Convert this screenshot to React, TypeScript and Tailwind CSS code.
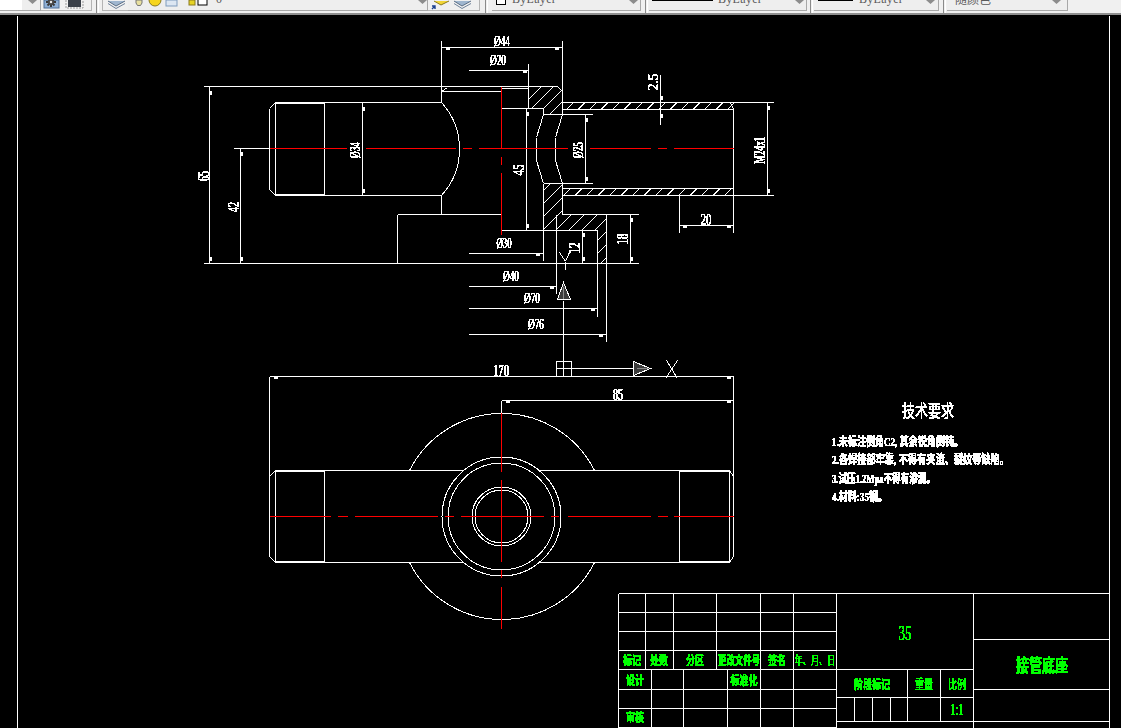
import React from "react";

type Seg = [number, number, number, number];

const FONT = '"Liberation Serif","Noto Sans CJK SC",serif';
const TOOLFONT = '"Liberation Serif","Noto Sans CJK SC",serif';

const white: Seg[] = [
  // front view outline
  [203, 86, 557, 86], [203, 263, 638, 263],
  [441, 40, 441, 102], [441, 195, 441, 214], [397, 214, 501, 214], [397, 214, 397, 263],
  [275, 102, 441, 102], [275, 195, 441, 195], [275, 102, 269, 108], [269, 108, 269, 189], [269, 189, 275, 195],
  [275, 103, 324, 103], [275, 194, 324, 194], [275, 102, 275, 195], [324, 103, 324, 194],
  [233, 148, 269, 148],
  [441, 91, 501, 91], [441, 91, 447, 87], [501, 88, 528, 88],
  [528, 63, 528, 108], [501, 108, 543, 108], [543, 108, 543, 114], [543, 114, 592, 114], [543, 183, 592, 183],
  [557, 86, 562, 91], [562, 40, 562, 114], [562, 183, 562, 214],
  [543, 114, 536, 137], [536, 137, 536, 160], [536, 160, 543, 183],
  [562, 114, 555, 137], [555, 137, 555, 160], [555, 160, 562, 183],
  // pipe
  [562, 102, 773, 102], [562, 195, 773, 195], [562, 109, 733, 109], [562, 188, 733, 188],
  [733, 109, 733, 232], [730, 102, 733, 109], [679, 195, 679, 232],
  // flange
  [543, 183, 543, 260], [562, 214, 638, 214], [501, 230, 597, 230], [606, 214, 606, 341], [597, 230, 597, 316], [556, 214, 556, 293],
  // weld
  [559, 252, 565, 261], [569, 252, 565, 261], [565, 261, 565, 269],
  // plan view
  [269, 376, 269, 476], [733, 376, 733, 476], [501, 400, 501, 412],
  [275, 470, 463, 470], [539, 470, 729, 470], [275, 562, 463, 562], [539, 562, 729, 562],
  [275, 471, 324, 471], [275, 561, 324, 561], [679, 471, 729, 471], [679, 561, 729, 561],
  [275, 470, 275, 562], [324, 471, 324, 561], [679, 470, 679, 562], [729, 470, 729, 562],
  [275, 470, 269, 476], [269, 476, 269, 556], [269, 556, 275, 562],
  [729, 470, 733, 476], [733, 476, 733, 556], [733, 556, 729, 562],
  // frame
  [17, 15, 17, 728], [1109, 15, 1109, 728],
  // UCS
  [563, 300, 563, 361], [571, 368, 633, 368],
  [666, 360, 677, 378], [677, 360, 665, 378],
];

const red: Seg[] = [
  [269, 148, 346, 148], [365, 148, 455, 148], [462, 148, 471, 148], [478, 148, 567, 148], [589, 148, 650, 148], [657, 148, 666, 148], [673, 148, 733, 148],
  [501, 86, 501, 148], [501, 156, 501, 164], [501, 172, 501, 234],
  [269, 516, 330, 516], [337, 516, 347, 516], [354, 516, 437, 516], [444, 516, 453, 516], [460, 516, 543, 516], [550, 516, 558, 516], [567, 516, 650, 516], [657, 516, 667, 516], [673, 516, 733, 516],
  [501, 412, 501, 471], [501, 479, 501, 561], [501, 569, 501, 577], [501, 586, 501, 628],
];

// [x, y1, y2, tick1, tick2]
const dimV: number[][] = [
  [209, 86, 263, 92, 258], [240, 148, 263, 153, 258], [362, 102, 195, 108, 190], [526, 108, 230, 113, 225],
  [585, 114, 183, 119, 178], [660, 74, 124, 97, 115], [767, 102, 195, 107, 190], [630, 214, 263, 219, 258], [582, 230, 263, 234, 258],
];
// [y, x1, x2, tick1, tick2] tick 0 = none
const dimH: number[][] = [
  [47, 441, 562, 447, 556], [70, 468, 528, 0, 524], [253, 468, 543, 0, 537], [286, 468, 556, 0, 551], [308, 468, 597, 0, 592], [334, 468, 606, 0, 600],
  [225, 679, 733, 684, 728], [376, 269, 733, 275, 728], [400, 501, 733, 507, 728],
];

const rowsA = [593, 612, 631, 650, 669];
const rowsB = [669, 689, 708, 727];
const colsA = [618, 645, 673, 716, 760, 793, 836];
const colsB = [618, 651, 683, 727, 760, 793, 836];

const title: Seg[] = [
  ...rowsA.map((y): Seg => [618, y, 836, y]),
  ...colsA.map((x): Seg => [x, 593, x, 669]),
  ...rowsB.map((y): Seg => [618, y, 836, y]),
  ...colsB.map((x): Seg => [x, 669, x, 728]),
  [836, 593, 1109, 593], [836, 593, 836, 728], [973, 593, 973, 728],
  [836, 669, 973, 669], [836, 697, 973, 697], [836, 721, 973, 721],
  [907, 669, 907, 721], [940, 669, 940, 721], [854, 697, 854, 721], [872, 697, 872, 721], [890, 697, 890, 721],
  [973, 639, 1109, 639], [973, 689, 1109, 689], [973, 721, 1109, 721],
];

const hatchTop: Seg[] = Array.from({ length: 15 }, (_, i): Seg => [566 + i * 11.5, 109, 573 + i * 11.5, 102]);
const hatchBottom: Seg[] = Array.from({ length: 15 }, (_, i): Seg => [563 + i * 11.5, 195, 570 + i * 11.5, 188]);
const hatchA: Seg[] = Array.from({ length: 6 }, (_, i): Seg => [502 + i * 12, 125, 552 + i * 12, 75]);
const hatchB: Seg[] = Array.from({ length: 12 }, (_, i): Seg => [453 + i * 13, 280, 573 + i * 13, 160]);

function Lines({ data, color }: { data: Seg[]; color: string }) {
  return (
    <g stroke={color} strokeWidth={1} fill="none">
      {data.map((s, i) => (
        <line key={i} x1={s[0]} y1={s[1]} x2={s[2]} y2={s[3]} />
      ))}
    </g>
  );
}

function T({ x, y, s, w, c = "#ffffff", r, b, children }: { x: number; y: number; s: number; w: number; c?: string; r?: boolean; b?: boolean; children: string }) {
  return (
    <text
      x={x}
      y={y + s * 0.34}
      fontSize={s}
      fill={c}
      fontWeight={b ? 700 : 400}
      textAnchor="middle"
      textLength={w}
      lengthAdjust="spacingAndGlyphs"
      fontFamily={FONT}
      transform={r ? `rotate(-90 ${x} ${y})` : undefined}
    >
      {children}
    </text>
  );
}

function TL({ x, y, s, w, children }: { x: number; y: number; s: number; w: number; children: string }) {
  return (
    <text x={x} y={y + s * 0.36} fontSize={s} fontWeight={700} fill="#ffffff" textLength={w} lengthAdjust="spacingAndGlyphs" fontFamily={FONT}>
      {children}
    </text>
  );
}

function Arrow() {
  return (
    <svg width="9" height="4" viewBox="0 0 9 4" className="block">
      <path d="M0 0H9L4.5 4Z" fill="#8c8c8c" />
    </svg>
  );
}

function Grip() {
  return (
    <div className="flex h-full w-[6px] shrink-0 justify-center gap-px">
      <div className="h-full w-px bg-[#8a8a8a]" />
      <div className="h-full w-px bg-white" />
    </div>
  );
}

function Combo({ w, arrow, white = 0, children }: { w: number; arrow: number; white?: number; children?: React.ReactNode }) {
  return (
    <div className="relative h-[11px] shrink-0 overflow-hidden border-r border-b border-[#a8a8a8] bg-[#eeeeee]" style={{ width: w }}>
      {white > 0 && <div className="h-[10px] bg-white" style={{ width: white }} />}
      <div className="absolute top-0" style={{ left: arrow }}>
        <Arrow />
      </div>
      {children}
    </div>
  );
}

function ByLayer({ left, line, lineW, textX }: { left: number; line?: boolean; lineW?: number; textX: number }) {
  return (
    <>
      {line && <div className="absolute top-0 h-px bg-black" style={{ left, width: lineW }} />}
      {!line && <div className="absolute top-[-4px] h-[9px] w-[10px] border border-black bg-white" style={{ left }} />}
      <div
        className="absolute top-[-7px] text-[12px] leading-[13px] tracking-[0.3px] whitespace-nowrap text-[#5a5a5a]"
        style={{ left: textX, fontFamily: TOOLFONT }}
      >
        ByLayer
      </div>
    </>
  );
}

function LayersIcon({ x }: { x: number }) {
  return (
    <svg width="20" height="10" viewBox="0 0 20 10" className="absolute top-0" style={{ left: x }}>
      <path d="M1 1 L9 6 L18 1" fill="#9fb6cf" stroke="#5c6f86" />
      <path d="M1 3.5 L9 8.5 L18 3.5" fill="none" stroke="#6f829a" />
    </svg>
  );
}

export default function App() {
  return (
    <div className="flex h-[728px] w-[1121px] flex-col overflow-hidden bg-black">
      {/* Toolbar, cut by the top of the picture */}
      <div className="flex h-[15px] shrink-0 flex-col bg-[#f0f0f0]">
        <div className="flex h-[13px] items-start overflow-hidden bg-[#f0f0f0]">
          <Combo w={41} arrow={28} white={22} />
          <div className="relative h-[11px] w-[51px] shrink-0 border-r border-b border-[#b4b4b4]">
            <svg width="51" height="10" viewBox="0 0 51 10" className="absolute top-0 left-0">
              <rect x="3" y="0" width="15" height="8" fill="#8fb0d6" stroke="#4f6f96" />
              <path d="M10 -4V7M5 2H15M6.5 -1.5L13.5 5.5M13.5 -1.5L6.5 5.5" stroke="#3a3a3a" strokeWidth="2" />
              <circle cx="10" cy="2" r="3" fill="#4a4a4a" />
              <circle cx="10" cy="2" r="1.2" fill="#eeeeee" />
              <rect x="27" y="0" width="13" height="7" fill="#3a4048" />
              <path d="M25 0V8H42V0" fill="none" stroke="#9a9a9a" strokeDasharray="2 1" />
            </svg>
          </div>
          <div className="w-[2px] shrink-0" />
          <Grip />
          <div className="w-[2px] shrink-0" />
          <div className="relative h-[11px] w-[26px] shrink-0 border-b border-l border-[#b4b4b4]">
            <LayersIcon x={4} />
          </div>
          <Combo w={300} arrow={290} white={0}>
            <svg width="90" height="10" viewBox="0 0 90 10" className="absolute top-0 left-[1px]">
              <path d="M7 0H13V3L11.5 5.5H8.5L7 3Z" fill="#e8e0a0" stroke="#777" />
              <circle cx="26" cy="0" r="6" fill="#f6d51e" stroke="#8a7a20" />
              <rect x="37" y="0" width="11" height="6" fill="#dce6f2" stroke="#7f9bbd" />
              <rect x="60" y="0" width="6" height="5" fill="#e6d325" stroke="#8a7a20" />
              <rect x="69" y="-3" width="9" height="8" fill="#ffffff" stroke="#000000" />
            </svg>
            <div className="absolute top-[-7px] left-[88px] text-[12px] leading-[13px] text-[#5a5a5a]" style={{ fontFamily: TOOLFONT }}>
              0
            </div>
          </Combo>
          <div className="relative h-[11px] w-[52px] shrink-0 border-r border-b border-[#b4b4b4]">
            <svg width="22" height="10" viewBox="0 0 22 10" className="absolute top-0 left-[2px]">
              <path d="M4 1 L11 5 L19 1" fill="#f2d535" stroke="#8a7a20" />
              <path d="M2 9 L5 6 M2 6H5V9" fill="none" stroke="#1b3f8f" strokeWidth="1.4" />
            </svg>
            <LayersIcon x={25} />
          </div>
          <div className="w-[3px] shrink-0" />
          <Grip />
          <div className="w-[3px] shrink-0" />
          <Combo w={149} arrow={137}>
            <ByLayer left={4} textX={20} />
          </Combo>
          <div className="w-[2px] shrink-0" />
          <Grip />
          <Combo w={158} arrow={146}>
            <ByLayer left={3} line lineW={61} textX={69} />
          </Combo>
          <div className="w-px shrink-0" />
          <Grip />
          <Combo w={125} arrow={112}>
            <ByLayer left={4} line lineW={35} textX={45} />
          </Combo>
          <div className="w-[2px] shrink-0" />
          <Grip />
          <Combo w={121} arrow={105}>
            <div className="absolute top-[-7px] left-[8px] text-[12px] leading-[14px] whitespace-nowrap text-[#5a5a5a]" style={{ fontFamily: TOOLFONT }}>
              随颜色
            </div>
          </Combo>
        </div>
        <div className="h-[2px] shrink-0 bg-[#8f8f8f]" />
      </div>

      {/* Drawing area */}
      <div className="min-h-0 flex-1 bg-black">
        <svg width="1121" height="713" viewBox="0 15 1121 713" className="block">
          <defs>
            <filter id="aliased" filterUnits="userSpaceOnUse" x="0" y="0" width="1121" height="728" colorInterpolationFilters="sRGB">
              <feComponentTransfer>
                <feFuncA type="discrete" tableValues="0 1 1 1 1 1 1 1" />
              </feComponentTransfer>
            </filter>
            <clipPath id="hatchA">
              <path d="M528 86H557L562 91V114H543V108H528Z" />
            </clipPath>
            <clipPath id="hatchB">
              <path d="M543 183H562V214H606V263H597V230H543Z" />
            </clipPath>
          </defs>

          <g transform="translate(0.5 0.5)" shapeRendering="crispEdges">
            <Lines data={white} color="#ffffff" />
            <Lines data={hatchTop} color="#ffffff" />
            <Lines data={hatchBottom} color="#ffffff" />
            <g clipPath="url(#hatchA)">
              <Lines data={hatchA} color="#ffffff" />
            </g>
            <g clipPath="url(#hatchB)">
              <Lines data={hatchB} color="#ffffff" />
            </g>

            {dimV.map((d, i) => (
              <g key={i}>
                <line x1={d[0]} y1={d[1]} x2={d[0]} y2={d[2]} stroke="#ffffff" />
                <rect x={d[0] - 1} y={d[3] - 2} width={3} height={4} fill="#ffffff" />
                <rect x={d[0] - 1} y={d[4] - 2} width={3} height={4} fill="#ffffff" />
              </g>
            ))}
            {dimH.map((d, i) => (
              <g key={i}>
                <line x1={d[1]} y1={d[0]} x2={d[2]} y2={d[0]} stroke="#ffffff" />
                {d[3] > 0 && <rect x={d[3] - 2} y={d[0] - 1} width={4} height={3} fill="#ffffff" />}
                <rect x={d[4] - 2} y={d[0] - 1} width={4} height={3} fill="#ffffff" />
              </g>
            ))}

            <g fill="none" stroke="#ffffff">
              <path d="M441 102A69 69 0 0 1 441 195" />
              <path d="M409 470A103.5 103.5 0 0 1 594 470" />
              <path d="M409 562A103.5 103.5 0 0 0 594 562" />
              <circle cx="501" cy="516" r="59.5" />
              <circle cx="501" cy="516" r="53.5" />
              <circle cx="501" cy="516" r="29.5" />
              <circle cx="501" cy="516" r="26.5" />
            </g>

            <Lines data={title} color="#ffffff" />
            <Lines data={red} color="#ff0000" />

            {/* UCS icon */}
            <g stroke="#ffffff" fill="none">
              <path d="M563 282L557 299H570Z" fill="#3c3c3c" />
              <path d="M563 286V298" stroke="#8a8a8a" />
              <path d="M633 361L650 368L633 375Z" fill="#3c3c3c" />
              <path d="M636 368H647" stroke="#8a8a8a" />
              <rect x="556" y="361" width="15" height="15" fill="#000000" />
              <path d="M563 361V376M556 368H571" />
            </g>
          </g>

          <g filter="url(#aliased)">
            <T x={502} y={41} s={15} w={16}>Ø44</T>
            <T x={498} y={60} s={15} w={16}>Ø20</T>
            <T x={504} y={243} s={15} w={15}>Ø30</T>
            <T x={511} y={276} s={15} w={16}>Ø40</T>
            <T x={532} y={298} s={15} w={16}>Ø70</T>
            <T x={536} y={324} s={15} w={16}>Ø76</T>
            <T x={501} y={370} s={17} w={16}>170</T>
            <T x={618} y={394} s={17} w={10}>85</T>
            <T x={706} y={220} s={16} w={11}>20</T>
            <T x={203} y={176} s={17} w={10} r>65</T>
            <T x={233} y={207} s={17} w={10} r>42</T>
            <T x={355} y={150} s={15} w={16} r>Ø34</T>
            <T x={519} y={170} s={16} w={11} r>45</T>
            <T x={623} y={239} s={16} w={11} r>18</T>
            <T x={575} y={248} s={16} w={11} r>12</T>
            <T x={653} y={82} s={15} w={17} r>2.5</T>
            <T x={578} y={150} s={15} w={16} r>Ø25</T>
            <T x={760} y={150} s={16} w={27} r>M24x1</T>

            <T x={928} y={411} s={17} w={52}>技术要求</T>
            <TL x={832} y={442} s={12} w={131}>1.未标注倒角C2, 其余锐角倒钝。</TL>
            <TL x={832} y={460} s={12} w={177}>2.各焊接部牢靠, 不得有夹渣、裂纹等缺陷。</TL>
            <TL x={832} y={479} s={12} w={103}>3.试压1.2Mpa不得有渗漏。</TL>
            <TL x={832} y={497} s={12} w={55}>4.材料:35钢。</TL>

            <T x={905} y={633} s={21} w={13} c="#00ff00">35</T>
            <T x={632} y={661} s={12} w={18} c="#00ff00" b>标记</T>
            <T x={659} y={661} s={12} w={18} c="#00ff00" b>处数</T>
            <T x={695} y={661} s={12} w={18} c="#00ff00" b>分区</T>
            <T x={739} y={661} s={12} w={42} c="#00ff00" b>更改文件号</T>
            <T x={777} y={661} s={12} w={18} c="#00ff00" b>签名</T>
            <T x={815} y={661} s={12} w={41} c="#00ff00">年、月、日</T>
            <T x={635} y={681} s={12} w={18} c="#00ff00" b>设计</T>
            <T x={744} y={681} s={12} w={27} c="#00ff00" b>标准化</T>
            <T x={635} y={718} s={12} w={18} c="#00ff00" b>审核</T>
            <T x={872} y={685} s={12} w={36} c="#00ff00" b>阶段标记</T>
            <T x={924} y={685} s={12} w={18} c="#00ff00" b>重量</T>
            <T x={957} y={685} s={12} w={18} c="#00ff00">比例</T>
            <T x={957} y={710} s={16} w={13} c="#00ff00">1:1</T>
            <T x={1042} y={666} s={18} w={52} c="#00ff00" b>接管底座</T>
          </g>
        </svg>
      </div>
    </div>
  );
}
